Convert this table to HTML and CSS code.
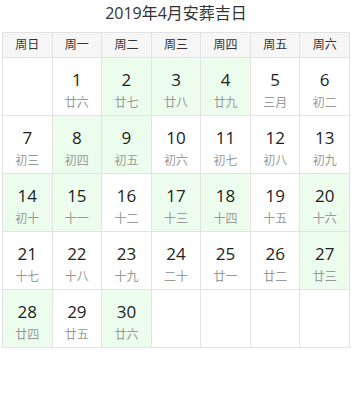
FILE: index.html
```html
<!DOCTYPE html>
<html lang="zh-CN">
<head>
<meta charset="utf-8">
<title>2019年4月安葬吉日</title>
<link rel="stylesheet" href="styles.css">
</head>
<body>
<div class="wrap">
  <h1 class="title">2019年4月安葬吉日</h1>
  <div class="cal">
    <div class="hd">周日</div><div class="hd">周一</div><div class="hd">周二</div><div class="hd">周三</div><div class="hd">周四</div><div class="hd">周五</div><div class="hd">周六</div>

    <div class="day"></div>
    <div class="day"><span class="n">1</span><span class="l">廿六</span></div>
    <div class="day good"><span class="n">2</span><span class="l">廿七</span></div>
    <div class="day good"><span class="n">3</span><span class="l">廿八</span></div>
    <div class="day good"><span class="n">4</span><span class="l">廿九</span></div>
    <div class="day"><span class="n">5</span><span class="l">三月</span></div>
    <div class="day"><span class="n">6</span><span class="l">初二</span></div>

    <div class="day"><span class="n">7</span><span class="l">初三</span></div>
    <div class="day good"><span class="n">8</span><span class="l">初四</span></div>
    <div class="day good"><span class="n">9</span><span class="l">初五</span></div>
    <div class="day"><span class="n">10</span><span class="l">初六</span></div>
    <div class="day"><span class="n">11</span><span class="l">初七</span></div>
    <div class="day"><span class="n">12</span><span class="l">初八</span></div>
    <div class="day"><span class="n">13</span><span class="l">初九</span></div>

    <div class="day good"><span class="n">14</span><span class="l">初十</span></div>
    <div class="day good"><span class="n">15</span><span class="l">十一</span></div>
    <div class="day"><span class="n">16</span><span class="l">十二</span></div>
    <div class="day good"><span class="n">17</span><span class="l">十三</span></div>
    <div class="day good"><span class="n">18</span><span class="l">十四</span></div>
    <div class="day"><span class="n">19</span><span class="l">十五</span></div>
    <div class="day good"><span class="n">20</span><span class="l">十六</span></div>

    <div class="day"><span class="n">21</span><span class="l">十七</span></div>
    <div class="day"><span class="n">22</span><span class="l">十八</span></div>
    <div class="day"><span class="n">23</span><span class="l">十九</span></div>
    <div class="day"><span class="n">24</span><span class="l">二十</span></div>
    <div class="day"><span class="n">25</span><span class="l">廿一</span></div>
    <div class="day"><span class="n">26</span><span class="l">廿二</span></div>
    <div class="day good"><span class="n">27</span><span class="l">廿三</span></div>

    <div class="day good"><span class="n">28</span><span class="l">廿四</span></div>
    <div class="day"><span class="n">29</span><span class="l">廿五</span></div>
    <div class="day good"><span class="n">30</span><span class="l">廿六</span></div>
    <div class="day"></div>
    <div class="day"></div>
    <div class="day"></div>
    <div class="day"></div>
  </div>
</div>
</body>
</html>
```

FILE: styles.css
```css
html, body {
  margin: 0;
  padding: 0;
  background: #ffffff;
}

body {
  font-family: "Open Sans", "Noto Sans CJK SC", sans-serif;
  color: #333333;
}

.wrap {
  width: 348px;
  margin-left: 2px;
}

.title {
  margin: 0 0 6px 0;
  height: 26px;
  line-height: 26px;
  font-size: 16px;
  font-weight: normal;
  text-align: center;
  color: #333333;
}

.cal {
  display: grid;
  grid-template-columns: repeat(7, 1fr);
  grid-template-rows: 24px repeat(5, 57px);
  gap: 1px;
  padding: 1px;
  background: #e3e3e3;
}

.hd {
  background: #f6f6f6;
  font-size: 12px;
  line-height: 24px;
  text-align: center;
  color: #333333;
}

.day {
  background: #ffffff;
  display: flex;
  flex-direction: column;
  align-items: center;
  padding-top: 10px;
}

.day.good {
  background: #edfded;
}

.n {
  font-size: 17px;
  line-height: 24px;
  color: #222222;
}

.l {
  margin-top: 3px;
  font-size: 12px;
  line-height: 16px;
  color: #999999;
}
```
